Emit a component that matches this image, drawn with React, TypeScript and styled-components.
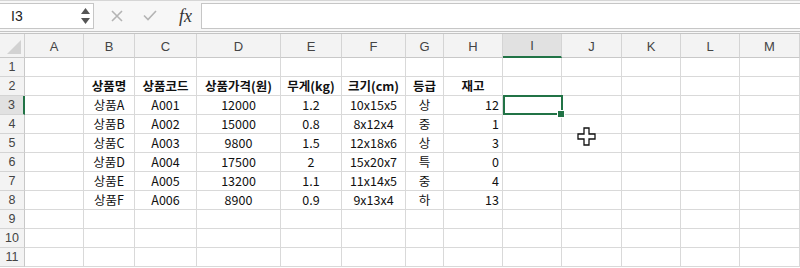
import * as React from "react"
import styled, {createGlobalStyle} from "styled-components"

const GlobalStyle = createGlobalStyle`
  body {
    margin: 0;
    background: #ffffff;
    font-family: "Noto Sans CJK KR", "Noto Sans", sans-serif;
  }
`

const columns = ["A", "B", "C", "D", "E", "F", "G", "H", "I", "J", "K", "L", "M"]
const widths = [59, 51, 62, 84, 61, 64, 38, 59, 59, 60, 59, 59, 60]

const headers = ["상품명", "상품코드", "상품가격(원)", "무게(kg)", "크기(cm)", "등급", "재고"]
const products = [
  ["상품A", "A001", "12000", "1.2", "10x15x5", "상", "12"],
  ["상품B", "A002", "15000", "0.8", "8x12x4", "중", "1"],
  ["상품C", "A003", "9800", "1.5", "12x18x6", "상", "3"],
  ["상품D", "A004", "17500", "2", "15x20x7", "특", "0"],
  ["상품E", "A005", "13200", "1.1", "11x14x5", "중", "4"],
  ["상품F", "A006", "8900", "0.9", "9x13x4", "하", "13"],
]

const Window = styled.div`
  position: relative;
  width: 800px;
  height: 268px;
  overflow: hidden;
  background: #ffffff;
`

const FormulaBar = styled.div`
  display: flex;
  align-items: center;
  height: 31px;
  box-sizing: border-box;
  border-top: 1px solid #d6d6d6;
  border-bottom: 3px double #c4c4c4;
  background: #f7f7f7;
  height: 34px;
  padding: 1px 0 2px;
`

const NameBox = styled.div`
  display: flex;
  align-items: center;
  justify-content: space-between;
  width: 94px;
  height: 26px;
  box-sizing: border-box;
  border: 1px solid #c6c6c6;
  border-left: none;
  background: #ffffff;
  padding: 0 3px 0 11px;
  font-family: "Liberation Sans", Arial, sans-serif;
  font-size: 14px;
  color: #222;
`

const Spin = styled.div`
  display: flex;
  flex-direction: column;
  gap: 4px;
`

const BarButtons = styled.div`
  display: flex;
  align-items: center;
  width: 107px;
  padding-left: 17px;
  box-sizing: border-box;
  gap: 20px;
`

const Fx = styled.span`
  font-family: "Liberation Serif", "Times New Roman", serif;
  font-style: italic;
  font-size: 18px;
  color: #333;
  margin-left: 2px;
  line-height: 1;
`

const FormulaInput = styled.div`
  flex: 1;
  height: 26px;
  box-sizing: border-box;
  border: 1px solid #c6c6c6;
  border-right: none;
  background: #ffffff;
`

const Sheet = styled.div`
  display: grid;
  grid-template-columns: 25px ${widths.map(w => `${w}px`).join(" ")};
  grid-template-rows: 24px repeat(11, 19px);
`

const Corner = styled.div`
  position: relative;
  background: #f3f3f3;
  border-right: 1px solid #d0d0d0;
  border-bottom: 1px solid #c8c8c8;
  &::after {
    content: "";
    position: absolute;
    right: 3px;
    bottom: 3px;
    border-style: solid;
    border-width: 0 0 14px 14px;
    border-color: transparent transparent #d2d2d2 transparent;
  }
`

const ColHeader = styled.div<{$active?: boolean}>`
  display: flex;
  align-items: center;
  justify-content: center;
  box-sizing: border-box;
  background: ${p => (p.$active ? "#e1e1e1" : "#f3f3f3")};
  border-right: 1px solid #d4d4d4;
  border-bottom: ${p => (p.$active ? "2px solid #217346" : "1px solid #c8c8c8")};
  font-family: "Liberation Sans", Arial, sans-serif;
  font-size: 13px;
  color: #444;
  padding-top: 1px;
`

const RowHeader = styled.div<{$active?: boolean}>`
  display: flex;
  align-items: center;
  justify-content: center;
  box-sizing: border-box;
  background: ${p => (p.$active ? "#e1e1e1" : "#f3f3f3")};
  border-right: ${p => (p.$active ? "2px solid #217346" : "1px solid #c8c8c8")};
  border-bottom: 1px solid #d4d4d4;
  font-family: "Liberation Sans", Arial, sans-serif;
  font-size: 12.5px;
  color: #444;
`

const Cell = styled.div<{$align?: "center" | "right"; $bold?: boolean; $selected?: boolean}>`
  position: relative;
  display: flex;
  align-items: center;
  justify-content: ${p => (p.$align === "right" ? "flex-end" : "center")};
  box-sizing: border-box;
  padding: 0 3px 1px;
  border-right: 1px solid #d9d9d9;
  border-bottom: 1px solid #d9d9d9;
  font-size: 12.5px;
  font-weight: ${p => (p.$bold ? 700 : 400)};
  color: #111;
  white-space: nowrap;
  ${p =>
    p.$selected &&
    `
    &::before {
      content: "";
      position: absolute;
      left: 0px;
      top: -1px;
      right: -2px;
      bottom: -1px;
      border: 2px solid #217346;
      z-index: 2;
    }
    &::after {
      content: "";
      position: absolute;
      right: -4px;
      bottom: -4px;
      width: 6px;
      height: 6px;
      background: #217346;
      border: 1px solid #ffffff;
      z-index: 3;
    }
  `}
`

const Pointer = styled.svg`
  position: absolute;
  left: 577px;
  top: 127px;
  z-index: 5;
`

const SpinArrow = ({down}: {down?: boolean}) => (
  <svg width="9" height="6" viewBox="0 0 9 6">
    <path d={down ? "M0 0 H9 L4.5 6 Z" : "M0 6 H9 L4.5 0 Z"} fill="#555" />
  </svg>
)

const App = () => {
  const rows = Array.from({length: 11}, (_, i) => i + 1)
  return (
    <Window>
      <GlobalStyle />
      <FormulaBar>
        <NameBox>
          I3
          <Spin>
            <SpinArrow />
            <SpinArrow down />
          </Spin>
        </NameBox>
        <BarButtons>
          <svg width="12" height="12" viewBox="0 0 12 12">
            <path d="M1 1 L11 11 M11 1 L1 11" stroke="#b4b4b4" strokeWidth="1.6" />
          </svg>
          <svg width="14" height="11" viewBox="0 0 14 11">
            <path d="M1 5.5 L5 9.5 L13 1" stroke="#b4b4b4" strokeWidth="1.6" fill="none" />
          </svg>
          <Fx>fx</Fx>
        </BarButtons>
        <FormulaInput />
      </FormulaBar>
      <Sheet>
        <Corner />
        {columns.map(c => (
          <ColHeader key={c} $active={c === "I"}>{c}</ColHeader>
        ))}
        {rows.map(r => {
          let values: string[] = []
          let bold = false
          if (r === 2) {
            values = headers
            bold = true
          } else if (r >= 3 && r <= 8) {
            values = products[r - 3]
          }
          return (
            <React.Fragment key={r}>
              <RowHeader $active={r === 3}>{r}</RowHeader>
              {columns.map((c, ci) => {
                const v = ci >= 1 && ci <= 7 ? values[ci - 1] : undefined
                return (
                  <Cell
                    key={c}
                    $bold={bold}
                    $align={c === "H" && !bold ? "right" : "center"}
                    $selected={c === "I" && r === 3}
                  >
                    {v}
                  </Cell>
                )
              })}
            </React.Fragment>
          )
        })}
      </Sheet>
      <Pointer width="19" height="19" viewBox="0 0 19 19">
        <path
          d="M7 1 H12 V7 H18 V12 H12 V18 H7 V12 H1 V7 H7 Z"
          fill="#ffffff"
          stroke="#111"
          strokeWidth="1.3"
        />
      </Pointer>
    </Window>
  )
}

export default App
